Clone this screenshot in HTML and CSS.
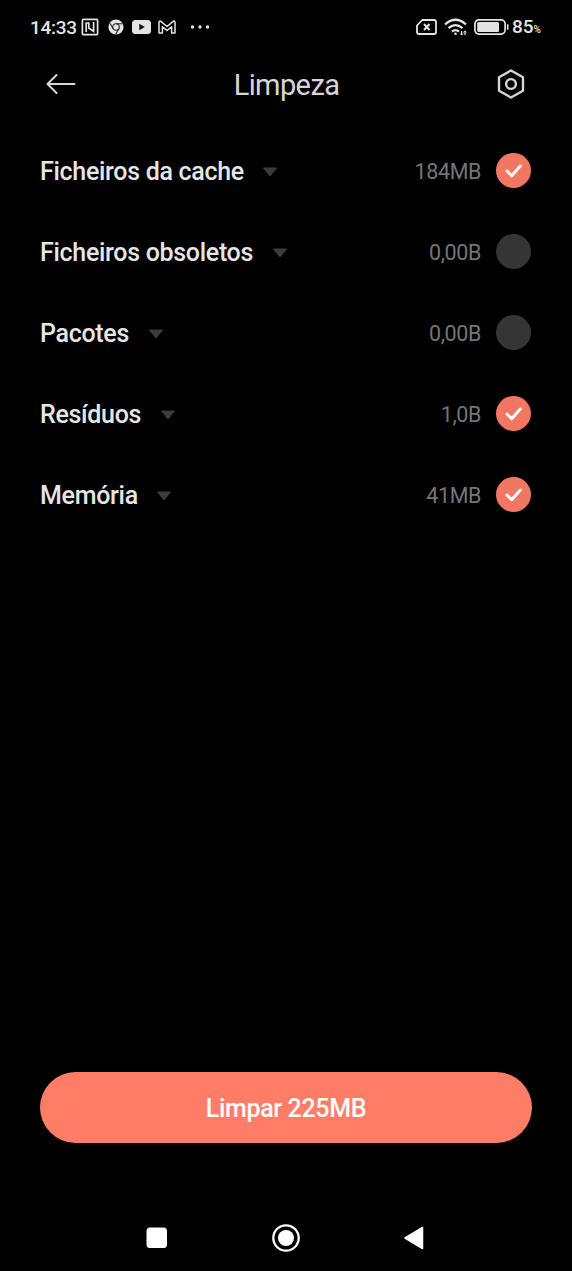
FILE: index.html
```html
<!DOCTYPE html>
<html lang="pt">
<head>
<meta charset="utf-8">
<title>Limpeza</title>
<link rel="stylesheet" href="styles.css">
</head>
<body>
<div class="screen">
  <div class="status">
    <span class="time">14:33</span>
    <svg class="nfc" width="18" height="18" viewBox="0 0 18 18" fill="none" stroke="#e4e4e4" stroke-width="1.700"><rect x="1.400" y="1.400" width="15.200" height="15.200" rx="1"/><path d="M5.200 14V5h2.600v5l4.800 3.400V4"/></svg>
    <svg class="chrome" width="16" height="16" viewBox="0 0 16 16"><circle cx="8" cy="8" r="7.600" fill="#e4e4e4"/><g fill="none" stroke="#222" stroke-width="1.100"><circle cx="8" cy="8" r="3.300"/><path d="M8 4.700h6.500M5.200 9.700L2 4.200M10.800 9.700l-3.200 5.600"/></g></svg>
    <svg class="youtube" width="19" height="14" viewBox="0 0 19 14"><rect width="19" height="14" rx="3.500" fill="#e4e4e4"/><path d="M7.300 3.800v6.400L12.800 7z" fill="#111"/></svg>
    <svg class="gmail" width="18" height="14" viewBox="0 0 18 14" fill="none" stroke="#e4e4e4" stroke-width="1.500" stroke-linejoin="round"><path d="M1 13V2.200Q1 .8 2.500 1.200L9 6.500l6.500-5.300Q17 .8 17 2.200V13h-3.400V6.800L9 10.500 4.400 6.800V13z"/></svg>
    <svg class="more" width="20" height="4" viewBox="0 0 20 4" fill="#e4e4e4"><circle cx="2.500" cy="2" r="1.700"/><circle cx="10" cy="2" r="1.700"/><circle cx="17.500" cy="2" r="1.700"/></svg>
    <svg class="sim" width="21" height="16" viewBox="0 0 21 16" fill="none" stroke="#e4e4e4" stroke-width="1.800"><path d="M6.200 1H18q2 0 2 2v10q0 2-2 2H3q-2 0-2-2V6.500z" stroke-linejoin="round"/><path d="M8 5l5.500 6M13.500 5L8 11" stroke-width="2"/></svg>
    <svg class="wifi" width="24" height="18" viewBox="0 0 24 18" fill="none" stroke="#e4e4e4" stroke-width="2.200"><path d="M1 6.500Q11.500-3 22 6.500M4.500 10.200q7-6 14 0M8 13.600q3.500-3 7 0"/><circle cx="11.500" cy="15.700" r="1.300" fill="#e4e4e4" stroke="none"/><path d="M17.600 17v-4M21 13v4" stroke-width="1.300"/><path d="M16 15.400l1.600 1.800 1.600-1.800M19.500 14.500l1.500-1.800 1.500 1.800" stroke-width=".8"/></svg>
    <svg class="battery" width="36" height="16" viewBox="0 0 36 16"><rect x=".9" y=".9" width="30.200" height="14.200" rx="4" fill="none" stroke="#e4e4e4" stroke-width="1.700"/><rect x="3.200" y="3" width="21.800" height="10" rx="1.500" fill="#e4e4e4"/><path d="M33.700 5.300v5.400" stroke="#e4e4e4" stroke-width="1.600"/></svg>
    <span class="level">85<small>%</small></span>
  </div>
  <header class="header">
    <svg width="30" height="22" viewBox="0 0 30 22" fill="none" stroke="#d6d6d6" stroke-width="2" stroke-linecap="round" stroke-linejoin="round"><path d="M28.500 11H1.500M10.500 2L1.500 11l9 9"/></svg>
    <h1>Limpeza</h1>
    <svg width="28" height="30" viewBox="0 0 28 30" fill="none" stroke="#d6d6d6" stroke-width="2.400" stroke-linejoin="round"><path d="M14 1.500L26 8.200v13.600L14 28.500 2 21.800V8.200z"/><circle cx="14" cy="15" r="4.900"/></svg>
  </header>
  <main class="list">
    <div class="row"><span class="name">Ficheiros da cache</span><svg class="caret" width="16" height="10" viewBox="0 0 16 10"><path d="M1.500 1h13L8 9z"/></svg><span class="size">184MB</span><span class="check on"><svg width="35" height="35" viewBox="0 0 35 35"><path d="M11 18l4.700 4.700 8.600-9.700"/></svg></span></div>
    <div class="row"><span class="name">Ficheiros obsoletos</span><svg class="caret" width="16" height="10" viewBox="0 0 16 10"><path d="M1.500 1h13L8 9z"/></svg><span class="size">0,00B</span><span class="check"></span></div>
    <div class="row"><span class="name">Pacotes</span><svg class="caret" width="16" height="10" viewBox="0 0 16 10"><path d="M1.500 1h13L8 9z"/></svg><span class="size">0,00B</span><span class="check"></span></div>
    <div class="row"><span class="name">Resíduos</span><svg class="caret" width="16" height="10" viewBox="0 0 16 10"><path d="M1.500 1h13L8 9z"/></svg><span class="size">1,0B</span><span class="check on"><svg width="35" height="35" viewBox="0 0 35 35"><path d="M11 18l4.700 4.700 8.600-9.700"/></svg></span></div>
    <div class="row"><span class="name">Memória</span><svg class="caret" width="16" height="10" viewBox="0 0 16 10"><path d="M1.500 1h13L8 9z"/></svg><span class="size">41MB</span><span class="check on"><svg width="35" height="35" viewBox="0 0 35 35"><path d="M11 18l4.700 4.700 8.600-9.700"/></svg></span></div>
  </main>
  <button class="clean">Limpar 225MB</button>
  <nav class="nav">
    <svg width="22" height="22" viewBox="0 0 22 22"><rect x=".5" y=".5" width="20.500" height="20.500" rx="3.500" fill="#fff"/></svg>
    <svg width="28" height="28" viewBox="0 0 28 28"><circle cx="14" cy="14" r="12.700" fill="none" stroke="#fff" stroke-width="2.300"/><circle cx="14" cy="14" r="8" fill="#fff"/></svg>
    <svg width="22" height="24" viewBox="0 0 22 24"><path d="M2 12L19.500 1.500v21z" fill="#fff" stroke="#fff" stroke-width="1.500" stroke-linejoin="round"/></svg>
  </nav>
</div>
</body>
</html>
```
FILE: styles.css
```css
* { box-sizing: border-box; }
body { margin: 0; background: #000; font-family: Roboto, sans-serif; }
.screen { width: 572px; height: 1271px; display: flex; flex-direction: column; background: #000; }
svg { display: block; flex: none; }
.status { height: 54px; padding: 0 30px; display: flex; align-items: center; color: #e4e4e4; }
.time, .level { font-size: 19px; font-weight: 500; line-height: 22px; white-space: nowrap; padding-top: 1px; }
.time { width: 51px; letter-spacing: -.3px; }
.chrome { margin-left: 9px; }
.youtube { margin-left: 8px; }
.gmail { margin-left: 7px; }
.more { margin-left: 14px; }
.sim { margin-left: auto; }
.wifi { margin-left: 7px; }
.battery { margin-left: 6px; }
.level { width: 30px; margin-left: 2px; padding-top: 2px; }
.level small { font-size: 10px; }
.header { height: 60px; padding: 0 47px 0 46px; display: flex; align-items: center; justify-content: space-between; }
.header svg { margin-bottom: 1px; }
.header h1 { margin: 0; padding-top: 1px; font-size: 29px; font-weight: 400; line-height: 34px; letter-spacing: -.6px; color: #d6d6d6; }
.list { flex: 1; padding: 16px 41px 0 40px; }
.row { height: 81px; display: flex; align-items: center; }
.name { padding-top: 3px; font-size: 25px; font-weight: 500; line-height: 30px; letter-spacing: -.3px; color: #e6e6e6; white-space: nowrap; }
.caret { margin: 3px 0 0 18.5px; fill: #3c3c3c; stroke: #3c3c3c; stroke-linejoin: round; }
.size { margin-left: auto; padding-top: 3px; font-size: 21.5px; line-height: 28px; letter-spacing: -.4px; color: #757575; }
.check { width: 35px; height: 35px; margin: 0 0 1px 15px; border-radius: 50%; background: #353535; }
.check.on { background: #f27763; }
.check path { fill: none; stroke: #fff; stroke-width: 3; stroke-linecap: round; stroke-linejoin: round; }
.clean { height: 71px; margin: 0 40px; padding: 2px 0 0; border: 0; border-radius: 36px; background: #ff7d67; color: #fff; font: 500 25px/30px Roboto, sans-serif; letter-spacing: -.35px; }
.nav { height: 66px; margin-top: 62px; padding: 0 147px 0 146px; display: flex; align-items: center; justify-content: space-between; }
```
